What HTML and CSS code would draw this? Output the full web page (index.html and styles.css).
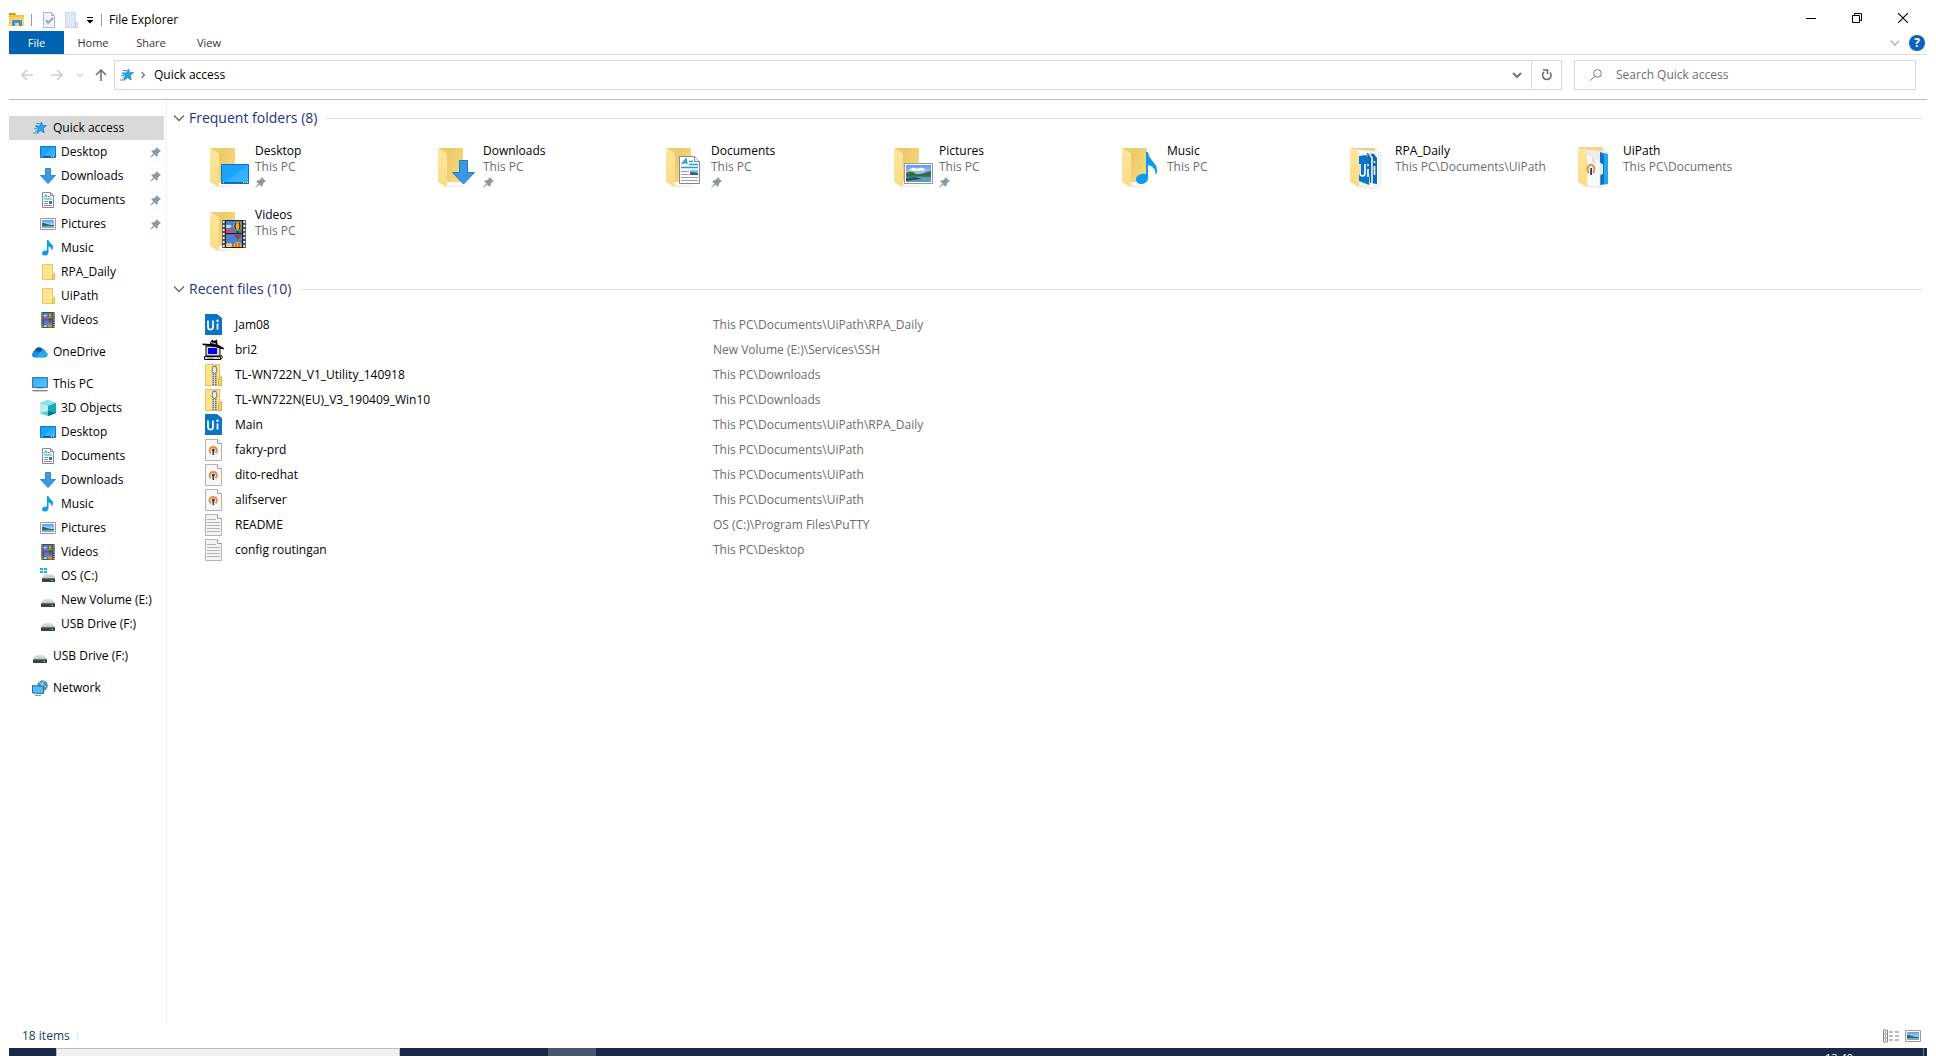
FILE: index.html
```html
<!DOCTYPE html>
<html lang="en">
<head>
<meta charset="utf-8">
<title>File Explorer</title>
<link rel="stylesheet" href="styles.css">
</head>
<body>
<svg class="sprite" aria-hidden="true">
  <defs>
    <linearGradient id="g-blue" x1="0" y1="0" x2="1" y2="1"><stop offset="0" stop-color="#1ba1fb"/><stop offset=".5" stop-color="#1ba3ff"/><stop offset=".52" stop-color="#30aeff"/><stop offset="1" stop-color="#45b4ff"/></linearGradient>
    <linearGradient id="g-back" x1="0" y1="0" x2="1" y2="1"><stop offset="0" stop-color="#e9c765"/><stop offset="1" stop-color="#f9dc84"/></linearGradient>
    <linearGradient id="g-front" x1="0" y1="0" x2="0" y2="1"><stop offset="0" stop-color="#ffe79f"/><stop offset="1" stop-color="#fadb83"/></linearGradient>
    <linearGradient id="g-sky" x1="0" y1="0" x2="0" y2="1"><stop offset="0" stop-color="#5c9bf0"/><stop offset="1" stop-color="#e4f2fb"/></linearGradient>
    <linearGradient id="g-drive" x1="0" y1="0" x2="0" y2="1"><stop offset="0" stop-color="#e4e6e8"/><stop offset="1" stop-color="#bfc3c6"/></linearGradient>
  </defs>
  <symbol id="star" viewBox="0 0 16 16"><path d="M9.500 2l1 3.700 4-.2-3.300 2.800 1 4.700-3.700-2.500-3.700 3 1.300-4.700-2.500-2.800h4z" fill="#22a4ee" stroke="#1678bd" stroke-width=".7"/><path d="M4 3.500h4M3 6h2M2 8.500h3M3 11h2M1 13h3" stroke="#3c9edb"/></symbol>
  <symbol id="desktop" viewBox="0 0 16 16"><path d="M.5 2.500h15v11H.5z" fill="url(#g-blue)" stroke="#0a78c8"/><path d="M1 12.500h14" stroke="#07538e"/><path d="M1.500 12.500h1M11 12.500h1M13 12.500h1" stroke="#fff"/></symbol>
  <symbol id="download" viewBox="0 0 16 16"><path d="M5.500.5h5v7h5L8 15.500.5 7.500h5z" fill="#3b97e8" stroke="#1f74bf" stroke-width=".8"/></symbol>
  <symbol id="document" viewBox="0 0 16 16"><path d="M2.500.5h8l3 3v12h-11z" fill="#fff" stroke="#85898c"/><path d="M10.500.5v3h3" fill="none" stroke="#85898c"/><path d="M4 5.500l2-3 1 3M8 4.500h2M4 7h8" stroke="#159be8" fill="none"/><path d="M4 9.500h4M4 11.500h4M4 13.500h8" stroke="#8b9195"/><path d="M9 9h3v3H9z" fill="#39799c"/></symbol>
  <symbol id="picture" viewBox="0 0 16 16"><path d="M.5 2.500h15v11H.5z" fill="#fff" stroke="#9a9a9a"/><path d="M2 4h12v8H2z" fill="url(#g-sky)"/><path d="M2 7c4 0 5 2 12 2v1H2z" fill="#2c6b54"/><path d="M2 10h12v2H2z" fill="#74adc9"/></symbol>
  <symbol id="music" viewBox="0 0 16 16"><path d="M7 0h1.500c.3 3 4.500 4 4.500 7 0 1.500-.5 2.500-1.500 3.500 0-2.500-.8-3.500-3-4V12c0 2-1.500 3.500-3.500 3.500C3 15.500 2 14.500 2 13.300c0-1.800 2.500-3.300 5-2.600z" fill="#0a9bf5"/></symbol>
  <symbol id="folder" viewBox="0 0 16 16"><path d="M2.500.5h10v9l2 1v5h-12z" fill="#ffe591" stroke="#ecc75c"/><path d="M12.500 10.500l2-1v6h-2z" fill="#fcd670" stroke="#e0b341" stroke-width=".8"/></symbol>
  <symbol id="video" viewBox="0 0 24 28"><path d="M0 0h24v28H0z" fill="#555"/><path d="M1.700 1v27M22.300 1v27" stroke="#eee" stroke-width="1.800" stroke-dasharray="2 2"/><path d="M4 1h16v12H4zM4 14.500h16V27H4z" fill="#4a80dc"/><path d="M3.500 0v28M20.500 0v28M4 13.500h16M4 .5h16M4 27.500h16" stroke="#222"/><path d="M4 5q4-1 6 1l-2 2H4z" fill="#b8dcf5"/><path d="M4 9q6 0 8 4H4z" fill="#e2445c"/><path d="M13 13l7-3v3z" fill="#2f8b43"/><circle cx="15.500" cy="6" r="4" fill="#e9b622"/><path d="M14 2.500q-2 4 0 7M17 2.500q2 4 0 7" stroke="#302235" stroke-width="1.300" fill="none"/><path d="M14.500 11h2v2h-2z" fill="#4c3010"/><path d="M12 15h8l-3 4h-2z" fill="#d62e2e"/><path d="M14 15h3l-1 4z" fill="#267c4b"/><circle cx="15.500" cy="26" r="4" fill="#f2b823"/><path d="M4 24q4-2 6 0v3H4z" fill="#e8d15f"/><path d="M14 23v4M17 23v4" stroke="#bb2c2c"/><path d="M4 27.500h16" stroke="#222"/></symbol>
  <symbol id="onedrive" viewBox="0 0 16 16"><path d="M3 11C.5 10 0 7 3 6.500 4 3 8.500 2 11 5.500l-1 5z" fill="#0f6cbd"/><path d="M3 13.500C-1 13.500-1 8 3 8c2-1 4 0 6 2l3 3z" fill="#1490df"/><path d="M9 7c2-2.500 5-1.500 5 1 3 1 2 5.500-1 5.500H4z" fill="#28a8ea"/><path d="M4 4.500Q8 2 11 5.500L8 8 3 6.500z" fill="#0a55a5"/></symbol>
  <symbol id="pc" viewBox="0 0 16 16"><path d="M.5 1.500h15v10H.5z" fill="url(#g-blue)" stroke="#47789c"/><path d="M1.500 2.500h13v8h-13z" fill="#63bfff" opacity=".6"/><path d="M5 12.500h6" stroke="#bcc6cc"/><path d="M0 14.500h16" stroke="#7c909d"/><path d="M1 15.500h14" stroke="#c1ccd3"/></symbol>
  <symbol id="cube" viewBox="0 0 16 16"><path d="M0 3l8-3 8 3v10l-8 3-8-3z" fill="#3cc2cd"/><path d="M0 3l8-3 8 3-8 3z" fill="#8ee3e8"/><path d="M0 3l8 3v10l-8-3z" fill="#b9eef0"/><path d="M8 6l8-3v10l-8 3z" fill="#16a9b9"/><path d="M8 11l8 2-8 3z" fill="#077887"/><path d="M8 11l-8 2 8 3z" fill="#59cdd4"/></symbol>
  <symbol id="drive" viewBox="0 0 16 16"><path d="M4 7h8l3 4H1z" fill="url(#g-drive)"/><path d="M1 11h14v4H1z" fill="#3c4144"/><path d="M1 11.500h14" stroke="#6d7376"/><path d="M11 13h2v1h-2z" fill="#3de04b"/></symbol>
  <symbol id="osdrive" viewBox="0 0 16 16"><path d="M5 6h8l2 4H2z" fill="url(#g-drive)"/><path d="M2 10h13v4H2z" fill="#3c4144"/><path d="M2 10.500h13" stroke="#6d7376"/><path d="M11 12h2v1h-2z" fill="#3de04b"/><path d="M0 0h3v2H0zM4 0h3v2H4zM0 3h3v2H0zM4 3h3v2H4z" fill="#10b4e8"/></symbol>
  <symbol id="network" viewBox="0 0 16 16"><circle cx="10.500" cy="5.500" r="5.300" fill="#4f8fb0"/><path d="M7 2q3 1 3 4M12 1l-2 3 4 3" stroke="#b9dff0" stroke-width="1" fill="none"/><path d="M.5 5.500l11 1v7l-11-.5z" fill="#57bcf6" stroke="#1f6ea5"/><path d="M5 14v1M3 15.500h6" stroke="#8da2b0"/></symbol>
  <symbol id="pin" viewBox="0 0 11 11"><path d="M6.500 0L11 4.500 9.500 5 8 6.500l-.5 2.500-1 .7L4.500 7.500.7 10.800l-.5-.5L3.500 6.500 1.300 4.500 2 3.500 4.500 3 6 1.500z" fill="#8e9aa1"/></symbol>
  <symbol id="chevron" viewBox="0 0 12 12"><path d="M1 3.500l5 5 5-5" fill="none" stroke="currentColor" stroke-width="1.300"/></symbol>
  <symbol id="chevron-bold" viewBox="0 0 12 12"><path d="M2 4l4 4 4-4" fill="none" stroke="currentColor" stroke-width="2"/></symbol>
  <symbol id="arrow" viewBox="0 0 12 12"><path d="M12 6H1M6 1L1 6l5 5" fill="none" stroke="currentColor" stroke-width="1.600"/></symbol>
  <symbol id="folder-open" viewBox="0 0 44 44"><path d="M9 2h16v34H9z" fill="url(#g-back)"/><path d="M6 39l6 3 20-3z" fill="#ddd" opacity=".4"/><path d="M0 2l9 6v33.500L0 36z" fill="url(#g-front)"/><path d="M0 2h10l-1 6z" fill="#f0ce70"/></symbol>
  <symbol id="ui" viewBox="0 0 18 22"><path d="M1 0h12l5 4v17H1z" fill="#0b75c4"/><path d="M4 6.500v6.500q0 2.500 2.500 2.500T9 13V6.500M13.500 9.500v6" fill="none" stroke="#fff" stroke-width="1.700"/><circle cx="13.500" cy="6.800" r="1.200" fill="#fff"/></symbol>
  <symbol id="putty" viewBox="0 0 22 22"><path d="M4 7h14v10H4z" fill="#d5d5d5" stroke="#000"/><path d="M6 9h9v6H6z" fill="#0000f5"/><path d="M2.500 17.500h16v3h-16z" fill="#ddd" stroke="#000"/><path d="M5 19h7M15 19h2" stroke="#777"/><path d="M19 16q3 4-1 4" fill="none" stroke="#000"/><path d="M8 4l2-3.500 2 1.500 3-1.500.5 5L22 9l-.5 1.500L13 8 .500 6V4.500L8 5z" fill="#000"/><path d="M9 3.500l5 1.500" stroke="#ccc"/></symbol>
  <symbol id="zip" viewBox="0 0 18 22"><path d="M1.500.5h14v13l2 1v7h-16z" fill="#ffe38a" stroke="#e8c359"/><path d="M14.500 14.500l3-2v9h-3z" fill="#fad267" stroke="#dcae3a"/><path d="M8.500 0h4v22h-4z" fill="#bcbcb5"/><path d="M10.500 8v14" stroke="#666" stroke-width="4" stroke-dasharray="1 1"/><path d="M10.500 0v22" stroke="#ddd"/><path d="M9 2.500h3l1 5-2.500 2L8 7.500z" fill="#eee" stroke="#77776f"/></symbol>
  <symbol id="ovpn" viewBox="0 0 18 22"><path d="M1.500.5h12l4 4v17h-16z" fill="#f8f8f8" stroke="#b2b2b2"/><path d="M13.500.5v4h4" fill="#fff" stroke="#a0a0a0"/><path d="M7 14.300A3.600 3.600 0 1 1 11.500 14.300" fill="none" stroke="#f08b36" stroke-width="2"/><circle cx="9.300" cy="11" r="1.500" fill="#17456f"/><path d="M8.500 11h1.600v5H8.500z" fill="#17456f"/></symbol>
  <symbol id="text" viewBox="0 0 18 22"><path d="M1.500.5h12l4 4v17h-16z" fill="#f4f4f4" stroke="#b2b2b2"/><path d="M13.500.5v4h4" fill="#fff" stroke="#a0a0a0"/><path d="M3 5.500h9M3 8.500h13M3 11.500h13M3 14.500h13M3 17.500h13" stroke="#b4b4b4"/></symbol>
</svg>

<div class="window">
  <header class="titlebar">
    <div class="quick-tools">
      <svg class="i16" viewBox="0 0 16 16"><path d="M0 1h6l1 2h8v11H0z" fill="#f6c445"/><path d="M0 1h6l1 2H0z" fill="#d9930e"/><path d="M1 5h14v9H1z" fill="#ffd35b"/><path d="M3 14V8h10v6h-3v-3H6v3z" fill="#3c92dc"/></svg>
      <span class="rule"></span>
      <button class="tool first" aria-label="Properties"><svg class="i16" viewBox="0 0 16 16"><path d="M2.500.5h8l3 3v12h-11z" fill="#eff4fb" stroke="#a9b8cf"/><path d="M10.500.5v3h3" fill="none" stroke="#a9b8cf"/><path d="M5 8l2 3 5-5" fill="none" stroke="#8fa5c8" stroke-width="2"/></svg></button>
      <button class="tool" aria-label="New folder"><svg class="i16" viewBox="0 0 16 16"><path d="M2.500.5h10v9l2 1v5h-12z" fill="#dfe7f4" stroke="#ccd8ea"/><path d="M12.500 10v5.500" stroke="#b9c8e0"/></svg></button>
      <button class="tool menu" aria-label="Customize toolbar"><svg class="i8" viewBox="0 0 8 8"><path d="M1 1.500h6" stroke="#000"/><path d="M.5 4h7L4 7.500z" fill="#000"/></svg></button>
      <span class="rule"></span>
    </div>
    <h1 class="title">File Explorer</h1>
    <div class="controls">
      <button aria-label="Minimize"><svg class="i10" viewBox="0 0 10 10"><path d="M0 5.500h10" stroke="#000"/></svg></button>
      <button aria-label="Restore"><svg class="i10" viewBox="0 0 10 10"><path d="M.5 2.500h7v7h-7zM2.500 2.500v-2h7v7h-2" fill="none" stroke="#000"/></svg></button>
      <button aria-label="Close"><svg class="i10" viewBox="0 0 10 10"><path d="M0 0l10 10M10 0L0 10" stroke="#000" stroke-width="1.100"/></svg></button>
    </div>
  </header>

  <div class="ribbon">
    <button class="tab file">File</button>
    <button class="tab">Home</button>
    <button class="tab">Share</button>
    <button class="tab">View</button>
    <div class="ribbon-end">
      <button class="tool" aria-label="Expand the ribbon"><svg class="i10 gray"><use href="#chevron"/></svg></button>
      <button class="help" aria-label="Help">?</button>
    </div>
  </div>

  <div class="navbar">
    <div class="history">
      <button class="tool" aria-label="Back"><svg class="i12 faint"><use href="#arrow"/></svg></button>
      <button class="tool" aria-label="Forward"><svg class="i12 faint flip"><use href="#arrow"/></svg></button>
      <button class="tool small" aria-label="Recent locations"><svg class="i8 faint"><use href="#chevron-bold"/></svg></button>
      <button class="tool up" aria-label="Up"><svg class="i12 strong quarter" viewBox="0 0 12 12"><use href="#arrow"/></svg></button>
    </div>
    <div class="address">
      <svg class="i16"><use href="#star"/></svg>
      <svg class="i8 strong right"><use href="#chevron-bold"/></svg>
      <button class="crumb">Quick access</button>
      <button class="tool drop" aria-label="Previous locations"><svg class="i12 strong"><use href="#chevron-bold"/></svg></button>
      <button class="tool refresh" aria-label="Refresh"><svg class="i12" viewBox="0 0 12 12"><path d="M3 3.200A4.200 4.200 0 1 0 9 3.500" fill="none" stroke="#666" stroke-width="1.600"/><path d="M2 1h4.500v4" fill="none" stroke="#666" stroke-width="1.500"/></svg></button>
    </div>
    <label class="search">
      <svg class="i12" viewBox="0 0 12 12"><circle cx="7.500" cy="4.500" r="3.800" fill="none" stroke="#777"/><path d="M4.700 7.300L.3 11.700" stroke="#777"/></svg>
      <input type="search" placeholder="Search Quick access" aria-label="Search Quick access">
    </label>
  </div>

  <div class="body">
    <nav class="tree" aria-label="Folders">
      <ul>
        <li><a class="selected" href="#"><svg class="i16"><use href="#star"/></svg>Quick access</a>
          <ul>
            <li><a href="#"><svg class="i16"><use href="#desktop"/></svg>Desktop<svg class="pin"><use href="#pin"/></svg></a></li>
            <li><a href="#"><svg class="i16"><use href="#download"/></svg>Downloads<svg class="pin"><use href="#pin"/></svg></a></li>
            <li><a href="#"><svg class="i16"><use href="#document"/></svg>Documents<svg class="pin"><use href="#pin"/></svg></a></li>
            <li><a href="#"><svg class="i16"><use href="#picture"/></svg>Pictures<svg class="pin"><use href="#pin"/></svg></a></li>
            <li><a href="#"><svg class="i16"><use href="#music"/></svg>Music</a></li>
            <li><a href="#"><svg class="i16"><use href="#folder"/></svg>RPA_Daily</a></li>
            <li><a href="#"><svg class="i16"><use href="#folder"/></svg>UiPath</a></li>
            <li><a href="#"><svg class="i16"><use href="#video"/></svg>Videos</a></li>
          </ul>
        </li>
        <li><a href="#"><svg class="i16"><use href="#onedrive"/></svg>OneDrive</a></li>
        <li><a href="#"><svg class="i16"><use href="#pc"/></svg>This PC</a>
          <ul>
            <li><a href="#"><svg class="i16"><use href="#cube"/></svg>3D Objects</a></li>
            <li><a href="#"><svg class="i16"><use href="#desktop"/></svg>Desktop</a></li>
            <li><a href="#"><svg class="i16"><use href="#document"/></svg>Documents</a></li>
            <li><a href="#"><svg class="i16"><use href="#download"/></svg>Downloads</a></li>
            <li><a href="#"><svg class="i16"><use href="#music"/></svg>Music</a></li>
            <li><a href="#"><svg class="i16"><use href="#picture"/></svg>Pictures</a></li>
            <li><a href="#"><svg class="i16"><use href="#video"/></svg>Videos</a></li>
            <li><a href="#"><svg class="i16"><use href="#osdrive"/></svg>OS (C:)</a></li>
            <li><a href="#"><svg class="i16"><use href="#drive"/></svg>New Volume (E:)</a></li>
            <li><a href="#"><svg class="i16"><use href="#drive"/></svg>USB Drive (F:)</a></li>
          </ul>
        </li>
        <li><a href="#"><svg class="i16"><use href="#drive"/></svg>USB Drive (F:)</a></li>
        <li><a href="#"><svg class="i16"><use href="#network"/></svg>Network</a></li>
      </ul>
    </nav>

    <main class="content">
      <section>
        <h2 class="group"><svg class="i12"><use href="#chevron"/></svg>Frequent folders (8)</h2>
        <ul class="tiles">
          <li><a class="tile" href="#"><svg class="big"><use href="#folder-open"/><path d="M11.500 19.500h27v19h-27z" fill="url(#g-blue)" stroke="#0d73b9"/><path d="M12 37.500h26" stroke="#0766aa"/><path d="M13 37.500h1M33 37.500h1M35 37.500h1M37 37.500h1" stroke="#fff"/></svg>
            <span class="label"><span class="name">Desktop</span><span class="where">This PC</span><svg class="pin"><use href="#pin"/></svg></span></a></li>
          <li><a class="tile" href="#"><svg class="big"><use href="#folder-open"/><path d="M21.500 15.500h8v12h7L25.500 39 14.500 27.500h7z" fill="#3b97e8" stroke="#2278c2"/></svg>
            <span class="label"><span class="name">Downloads</span><span class="where">This PC</span><svg class="pin"><use href="#pin"/></svg></span></a></li>
          <li><a class="tile" href="#"><svg class="big"><use href="#folder-open"/><path d="M13.500 11.500h15l5 5v22h-20z" fill="#fff" stroke="#85898c"/><path d="M28.500 11.500v5h5" fill="#eee" stroke="#85898c"/><path d="M16 19l4-5 1 5M17.500 17.500h3" fill="none" stroke="#1b8fd8" stroke-width="1.300"/><path d="M23 16.500h4M23 19.500h9M15 22.500h17" stroke="#23a0e8" stroke-width="1.400"/><path d="M15 26.500h8M15 29.500h8M15 32.500h17M15 35.500h17" stroke="#9a9ea1"/><path d="M24 25h8v5h-8z" fill="#86c1e2"/><path d="M24 27q4 0 8 1v2h-8z" fill="#2f6473"/></svg>
            <span class="label"><span class="name">Documents</span><span class="where">This PC</span><svg class="pin"><use href="#pin"/></svg></span></a></li>
          <li><a class="tile" href="#"><svg class="big"><use href="#folder-open"/><path d="M10.500 18.500h28v20h-28z" fill="#fff" stroke="#999"/><path d="M12 20h25v17H12z" fill="url(#g-sky)"/><path d="M15 25q4-4 8-1 5-3 9 1-8 2-17 0z" fill="#fff"/><path d="M12 28q6-3 10 1 7 0 10-2l5-1v6H12z" fill="#386e47"/><path d="M12 32q12-1 25 0v5H12z" fill="#5d9ebb"/><path d="M12 33l10-1 6 2-16 2z" fill="#27545f"/></svg>
            <span class="label"><span class="name">Pictures</span><span class="where">This PC</span><svg class="pin"><use href="#pin"/></svg></span></a></li>
          <li><a class="tile" href="#"><svg class="big"><use href="#folder-open"/><path d="M24 7h2c1 8 9 11 9 18 0 3-.5 4-1.500 5 .5-6-3-9-7.500-10v13c0 4-4 6-7 6s-5-2-5-4.500c0-4 5-6.500 10-5.500z" fill="#0a9bf5"/></svg>
            <span class="label"><span class="name">Music</span><span class="where">This PC</span></span></a></li>
          <li><a class="tile" href="#"><svg class="big"><use href="#folder-open"/><path d="M4 4l21 2 6 2v33l-9 3-13-3V8z" fill="#f5f5f5" stroke="#ddd" stroke-width=".6"/><path d="M0 2l9 6v33.500L0 36z" fill="url(#g-front)"/><path d="M17 8l7 1 3 4v26l-7-1z" fill="#0b68b4"/><path d="M9 11l7-1 3 4v26L9 36z" fill="#0b75c4"/><path d="M19 8l3 5v30" stroke="#fff" stroke-width="1.500" fill="none"/><path d="M10 19v9q0 3 2.500 3T15 28V19M18 24v8M24.500 21v9" fill="none" stroke="#fff" stroke-width="1.600"/><circle cx="18" cy="20" r="1" fill="#fff"/><circle cx="24.500" cy="17" r="1" fill="#fff"/></svg>
            <span class="label"><span class="name">RPA_Daily</span><span class="where">This PC\Documents\UiPath</span></span></a></li>
          <li><a class="tile" href="#"><svg class="big"><use href="#folder-open"/><path d="M3 3l22 2 5 2v33l-8 3-13-3V8z" fill="#eee"/><path d="M0 2h25v4L9 5z" fill="#f6d67c"/><path d="M22 7l8 2v30l-8 1z" fill="#27a6ee"/><path d="M22 7l4 3v29l-4 1z" fill="#0d75bd"/><path d="M9 9l7 4 6 4v26l-13-3z" fill="#fafafa" stroke="#ddd" stroke-width=".6"/><path d="M0 2l9 6v33.500L0 36z" fill="url(#g-front)"/><path d="M14 11l5 8-5-2z" fill="#ddd"/><path d="M22 18l3 1v10l-3 1z" fill="#d8eef0"/><path d="M11 28a3.500 4.500 0 1 1 4 0" fill="none" stroke="#f08b36" stroke-width="2"/><path d="M12.200 23h1.800v7h-1.800z" fill="#17456f"/></svg>
            <span class="label"><span class="name">UiPath</span><span class="where">This PC\Documents</span></span></a></li>
          <li><a class="tile" href="#"><svg class="big"><use href="#folder-open"/><use href="#video" x="12" y="11" width="24" height="28"/></svg>
            <span class="label"><span class="name">Videos</span><span class="where">This PC</span></span></a></li>
        </ul>
      </section>
      <section>
        <h2 class="group"><svg class="i12"><use href="#chevron"/></svg>Recent files (10)</h2>
        <table class="files">
          <tbody>
            <tr><td class="ico"><svg><use href="#ui"/></svg></td><td class="fname">Jam08</td><td class="fpath">This PC\Documents\UiPath\RPA_Daily</td></tr>
            <tr><td class="ico"><svg><use href="#putty"/></svg></td><td class="fname">bri2</td><td class="fpath">New Volume (E:)\Services\SSH</td></tr>
            <tr><td class="ico"><svg><use href="#zip"/></svg></td><td class="fname">TL-WN722N_V1_Utility_140918</td><td class="fpath">This PC\Downloads</td></tr>
            <tr><td class="ico"><svg><use href="#zip"/></svg></td><td class="fname">TL-WN722N(EU)_V3_190409_Win10</td><td class="fpath">This PC\Downloads</td></tr>
            <tr><td class="ico"><svg><use href="#ui"/></svg></td><td class="fname">Main</td><td class="fpath">This PC\Documents\UiPath\RPA_Daily</td></tr>
            <tr><td class="ico"><svg><use href="#ovpn"/></svg></td><td class="fname">fakry-prd</td><td class="fpath">This PC\Documents\UiPath</td></tr>
            <tr><td class="ico"><svg><use href="#ovpn"/></svg></td><td class="fname">dito-redhat</td><td class="fpath">This PC\Documents\UiPath</td></tr>
            <tr><td class="ico"><svg><use href="#ovpn"/></svg></td><td class="fname">alifserver</td><td class="fpath">This PC\Documents\UiPath</td></tr>
            <tr><td class="ico"><svg><use href="#text"/></svg></td><td class="fname">README</td><td class="fpath">OS (C:)\Program Files\PuTTY</td></tr>
            <tr><td class="ico"><svg><use href="#text"/></svg></td><td class="fname">config routingan</td><td class="fpath">This PC\Desktop</td></tr>
          </tbody>
        </table>
      </section>
    </main>
  </div>

  <footer class="status">
    <span class="count">18 items</span>
    <div class="views">
      <button class="tool" aria-label="Details view"><svg class="i16" viewBox="0 0 16 14"><path d="M.5 1h4v12h-4zM.5 5h4M.5 9h4" fill="none" stroke="#888"/><path d="M2 3h1M2 7h1M2 11h1" stroke="#345"/><path d="M6 3h4M6 7h4M6 11h4M12 3h4M12 7h4M12 11h4" stroke="#777"/></svg></button>
      <button class="tool" aria-label="Large icons view"><svg class="i16"><use href="#picture"/></svg></button>
    </div>
  </footer>
  <div class="taskbar">
    <div class="task-search"></div>
    <div class="task-active"></div>
    <time class="clock">13:49</time>
    <div class="show-desktop"></div>
  </div>
</div>
</body>
</html>
```

FILE: styles.css
```css
* { box-sizing: border-box; }
body {
  margin: 0;
  background: #fff;
  color: #000;
  font: 12px/16px "Open Sans", "Noto Sans", sans-serif;
}
ul { list-style: none; margin: 0; padding: 0; }
a { color: inherit; text-decoration: none; }
button {
  border: 0;
  padding: 0;
  background: none;
  color: inherit;
  font: inherit;
}
svg { display: block; flex: none; }
.sprite { position: absolute; width: 0; height: 0; }
.i8 { width: 8px; height: 8px; }
.i10 { width: 10px; height: 10px; }
.i12 { width: 12px; height: 12px; }
.i16 { width: 16px; height: 16px; }
.pin { width: 11px; height: 11px; }
.faint { color: #d0d0d0; }
.gray { color: #999; }
.strong { color: #737373; }
.flip { transform: rotate(180deg); }
.quarter { transform: rotate(90deg); }
.right { transform: rotate(-90deg); }

.window {
  display: flex;
  flex-direction: column;
  height: 100vh;
  padding: 0 9px;
  overflow: hidden;
}

/* Title bar */
.titlebar { display: flex; height: 31px; }
.quick-tools { display: flex; align-items: center; gap: 6px; padding-top: 8px; }
.rule { width: 1px; height: 12px; background: #999; }
.tool { display: grid; place-items: center; }
.first { margin-left: 3px; }
.menu { width: 10px; }
.title { margin: 0; padding: 12px 0 0 7px; font-size: 12px; line-height: 16px; font-weight: 400; }
.controls { display: flex; margin-left: auto; padding-right: 1px; }
.controls button { display: grid; place-items: center; width: 46px; height: 36px; }

/* Ribbon tabs */
.ribbon { display: flex; height: 24px; border-bottom: 1px solid #dadbdc; color: #333; font-size: 11px; }
.tab { width: 58px; }
.file { width: 55px; background: #0063b1; color: #fff; }
.ribbon-end { display: flex; align-items: center; gap: 9px; margin-left: auto; padding-right: 2px; }
.help {
  width: 16px;
  height: 16px;
  border-radius: 50%;
  background: #0a63c0;
  color: #fff;
  font-size: 12px;
  font-weight: 700;
  line-height: 16px;
}

/* Address bar */
.navbar {
  display: flex;
  height: 45px;
  padding: 5px 11px 9px 0;
  border-bottom: 1px solid #b9b9b9;
}
.history { display: flex; align-items: center; width: 105px; padding-left: 3px; }
.history .tool { width: 30px; }
.history .small { width: 16px; }
.history .up { width: 26px; }
.address { display: flex; align-items: center; flex: 1; gap: 4px; padding-left: 4px; border: 1px solid #d9d9d9; }
.crumb { margin-left: 3px; }
.drop { width: 28px; margin-left: auto; }
.refresh { width: 30px; height: 100%; border-left: 1px solid #d9d9d9; margin-left: -4px; }
.search {
  display: flex;
  align-items: center;
  flex: 0 1 342px;
  gap: 14px;
  margin-left: 12px;
  padding-left: 15px;
  border: 1px solid #d9d9d9;
}
.search input { flex: 1; min-width: 0; border: 0; padding: 0; outline: 0; font: inherit; }
.search input::placeholder { color: #6d6d6d; opacity: 1; }

/* Navigation tree */
.body { display: flex; flex: 1; min-height: 0; }
.tree { width: 158px; padding-top: 16px; border-right: 1px solid #f2f2f2; white-space: nowrap; }
.tree > ul { display: grid; gap: 8px; }
.tree a { display: flex; align-items: center; gap: 5px; width: 155px; height: 24px; padding: 0 3px 0 23px; }
.tree ul ul a { padding-left: 31px; }
.tree .pin { margin-left: auto; }
.tree .selected { background: #d9d9d9; }

/* Content pane */
.content { flex: 1; min-width: 0; padding: 7px 5px 0 6px; }
.group {
  display: flex;
  align-items: center;
  gap: 4px;
  margin: 0 0 12px;
  color: #1e3287;
  font-size: 14px;
  line-height: 22px;
  font-weight: 400;
}
.group svg { color: #666; }
.group::after { content: ""; flex: 1; height: 1px; margin-left: 4px; background: #e2e2e2; }
.tiles { display: grid; grid-template-columns: repeat(auto-fill, 228px); margin-bottom: 9px; padding-left: 37px; }
.tile { display: flex; gap: 1px; height: 64px; padding-top: 2px; }
.big { width: 44px; height: 46px; margin-top: 2px; }
.label { display: flex; flex-direction: column; }
.label .pin { margin-top: 2px; }
.where, .fpath { color: #6d6d6d; }
.files { margin-left: 29px; border-collapse: collapse; }
.files td { height: 25px; padding: 0; }
.files svg { width: 22px; height: 22px; }
.ico { width: 33px; }
.fname { width: 478px; }

/* Status bar */
.status { display: flex; align-items: center; justify-content: space-between; height: 24px; padding: 0 6px 0 13px; color: #1e3a5f; }
.count { padding-right: 7px; border-right: 1px solid #eee; line-height: 12px; }
.views { display: flex; gap: 6px; }

/* Visible edge of the taskbar */
.taskbar { display: flex; height: 8px; padding-left: 47px; background: #1a2947; overflow: hidden; }
.task-search { width: 344px; background: #f1f1f1; border: 1px solid #bbb; border-bottom: 0; }
.task-active { width: 48px; margin-left: 148px; background: #49556c; }
.clock { margin-left: auto; padding-top: 3px; color: #fff; font-size: 11px; line-height: 14px; }
.show-desktop { width: 4px; margin-left: 70px; border-left: 1px solid #6b7589; }
```
